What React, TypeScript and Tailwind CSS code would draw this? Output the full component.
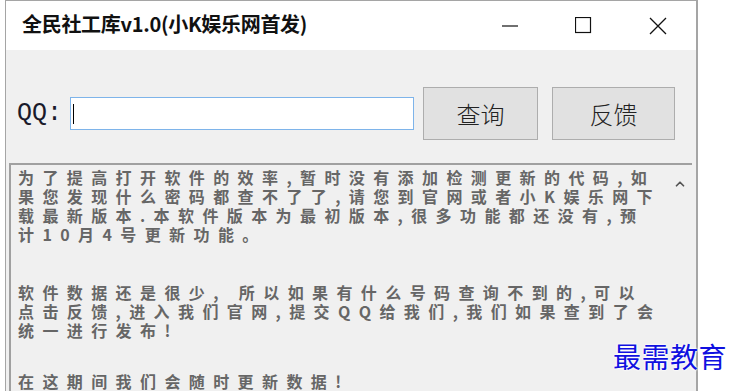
import { ChevronUp } from 'lucide-react'

const para1 = [
  '为了提高打开软件的效率,暂时没有添加检测更新的代码,如',
  '果您发现什么密码都查不了了,请您到官网或者小K娱乐网下',
  '载最新版本.本软件版本为最初版本,很多功能都还没有,预',
  '计10月4号更新功能。',
]

const para2 = [
  '软件数据还是很少, 所以如果有什么号码查询不到的,可以',
  '点击反馈,进入我们官网,提交QQ给我们,我们如果查到了会',
  '统一进行发布!',
]

const cjk = { fontFamily: '"Noto Sans CJK SC", "Noto Sans", sans-serif' }

function TitleBar() {
  return (
    <div className="flex h-[49px] items-center bg-white">
      <div className="ml-[16px] mt-[-3px] text-[20px] font-bold tracking-[-0.3px] text-[#111]" style={cjk}>
        全民社工库v1.0(小K娱乐网首发)
      </div>
      <div className="ml-auto flex items-center">
        <svg width="17" height="17" viewBox="0 0 17 17" className="mr-[56px]">
          <line x1="0" y1="9" x2="16" y2="9" stroke="#111" strokeWidth="1.2" />
        </svg>
        <svg width="17" height="17" viewBox="0 0 17 17" className="mr-[57px]">
          <rect x="0.5" y="0.5" width="15" height="15" fill="none" stroke="#111" strokeWidth="1.2" />
        </svg>
        <svg width="18" height="18" viewBox="0 0 18 18" className="mr-[29px]">
          <path d="M1 1 L17 17 M17 1 L1 17" stroke="#111" strokeWidth="1.3" />
        </svg>
      </div>
    </div>
  )
}

function Toolbar() {
  return (
    <div className="flex items-center pt-[37px] pb-[23px]">
      <span
        className="ml-[11px] text-[25px] leading-none text-[#1a1a2a]"
        style={{ fontFamily: '"Liberation Mono", monospace' }}
      >
        QQ:
      </span>
      <div className="ml-[8px] flex h-[33px] w-[344px] items-center border border-[#7eb4ea] bg-white px-[2px]">
        <div className="h-[20px] w-px bg-black" />
      </div>
      <button
        className="ml-[9px] h-[53px] w-[115px] border border-[#adadad] bg-[#e1e1e1] text-[24px] font-light text-[#222]"
        style={cjk}
      >
        查询
      </button>
      <button
        className="ml-[14px] h-[53px] w-[123px] border border-[#adadad] bg-[#e1e1e1] text-[24px] font-light text-[#222]"
        style={cjk}
      >
        反馈
      </button>
    </div>
  )
}

function Line({ text }: { text: string }) {
  return <div className="h-[19px] whitespace-nowrap">{text}</div>
}

function Notice() {
  return (
    <div className="relative ml-[3px] mr-[4px] flex-1 border-t-2 border-l-2 border-[#a0a0a0] bg-[#f0f0f0]">
      <div
        className="pl-[7px] pt-[3px] text-[16px] font-bold leading-[19px] tracking-[8.4px] text-[#666]"
        style={cjk}
      >
        {para1.map((t) => (
          <Line key={t} text={t} />
        ))}
        <div className="mt-[39px]">
          {para2.map((t) => (
            <Line key={t} text={t} />
          ))}
        </div>
        <div className="mt-[32px]">
          <Line text="在这期间我们会随时更新数据!" />
        </div>
      </div>
      <ChevronUp className="absolute right-[5px] top-[12px] text-[#555]" size={14} strokeWidth={3} />
    </div>
  )
}

export default function App() {
  return (
    <div className="relative h-[391px] w-[733px] overflow-hidden bg-white">
      <div className="ml-[5px] flex h-[391px] w-[693px] flex-col border-l border-t border-r-2 border-[#a5a5a5] bg-[#f0f0f0]">
        <TitleBar />
        <Toolbar />
        <Notice />
      </div>
      <div
        className="absolute left-[613px] top-[342px] text-[28px] leading-none tracking-[0.5px] text-[#1010e0]"
        style={{
          fontFamily: '"Noto Sans CJK SC", serif',
          textShadow: '0 0 2px #fff, 0 0 2px #fff, 0 0 3px #fff',
        }}
      >
        最需教育
      </div>
    </div>
  )
}
